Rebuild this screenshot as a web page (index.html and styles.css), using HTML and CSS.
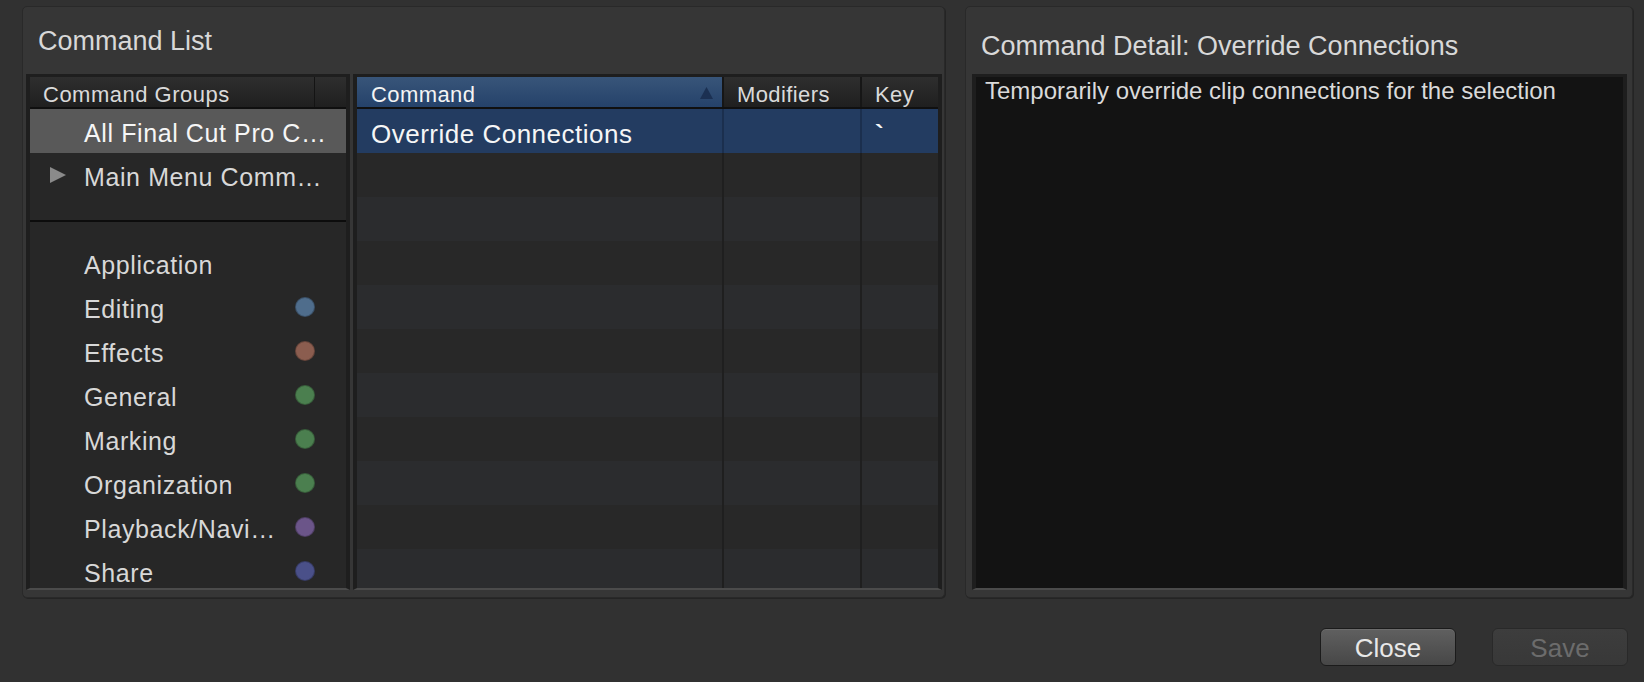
FILE: index.html
```html
<!DOCTYPE html>
<html lang="en">
<head>
<meta charset="utf-8">
<title>Command List</title>
<link rel="stylesheet" href="styles.css">
</head>
<body>
<div class="main">
  <section class="panel panel-list">
    <h1 class="panel-title">Command List</h1>
    <div class="list-body">
      <div class="box groups">
        <div class="groups-head">
          <div class="gh-cell">Command Groups</div>
          <div class="gh-rest"></div>
        </div>
        <div class="g-row selected"><span class="g-icon"></span><span class="g-label">All Final Cut Pro C…</span></div>
        <div class="g-row"><span class="g-icon"><svg class="disclosure" width="16" height="16" viewBox="0 0 16 16"><polygon points="0,0 16,8 0,16"/></svg></span><span class="g-label">Main Menu Comm…</span></div>
        <div class="g-sep"></div>
        <div class="g-row"><span class="g-icon"></span><span class="g-label">Application</span></div>
        <div class="g-row"><span class="g-icon"></span><span class="g-label">Editing</span><span class="dot dot-blue"></span></div>
        <div class="g-row"><span class="g-icon"></span><span class="g-label">Effects</span><span class="dot dot-brown"></span></div>
        <div class="g-row"><span class="g-icon"></span><span class="g-label">General</span><span class="dot dot-green"></span></div>
        <div class="g-row"><span class="g-icon"></span><span class="g-label">Marking</span><span class="dot dot-green"></span></div>
        <div class="g-row"><span class="g-icon"></span><span class="g-label">Organization</span><span class="dot dot-green"></span></div>
        <div class="g-row"><span class="g-icon"></span><span class="g-label">Playback/Navi…</span><span class="dot dot-purple"></span></div>
        <div class="g-row"><span class="g-icon"></span><span class="g-label">Share</span><span class="dot dot-indigo"></span></div>
      </div>
      <div class="box table">
        <div class="t-head">
          <div class="th th-sorted"><span>Command</span><svg class="sort" width="13" height="12" viewBox="0 0 13 12"><polygon points="6.5,0 13,12 0,12"/></svg></div>
          <div class="th th-sep">Modifiers</div>
          <div class="th th-sep">Key</div>
        </div>
        <div class="t-row selected"><div class="td">Override Connections</div><div class="td td-sep"></div><div class="td td-sep td-key">`</div></div>
        <div class="t-row"><div class="td"></div><div class="td td-sep"></div><div class="td td-sep"></div></div>
        <div class="t-row"><div class="td"></div><div class="td td-sep"></div><div class="td td-sep"></div></div>
        <div class="t-row"><div class="td"></div><div class="td td-sep"></div><div class="td td-sep"></div></div>
        <div class="t-row"><div class="td"></div><div class="td td-sep"></div><div class="td td-sep"></div></div>
        <div class="t-row"><div class="td"></div><div class="td td-sep"></div><div class="td td-sep"></div></div>
        <div class="t-row"><div class="td"></div><div class="td td-sep"></div><div class="td td-sep"></div></div>
        <div class="t-row"><div class="td"></div><div class="td td-sep"></div><div class="td td-sep"></div></div>
        <div class="t-row"><div class="td"></div><div class="td td-sep"></div><div class="td td-sep"></div></div>
        <div class="t-row"><div class="td"></div><div class="td td-sep"></div><div class="td td-sep"></div></div>
        <div class="t-row"><div class="td"></div><div class="td td-sep"></div><div class="td td-sep"></div></div>
      </div>
    </div>
  </section>
  <section class="panel panel-detail">
    <h1 class="panel-title">Command Detail: Override Connections</h1>
    <div class="box detail-box">
      <p class="detail-text">Temporarily override clip connections for the selection</p>
    </div>
  </section>
</div>
<div class="footer">
  <button class="btn btn-close" type="button">Close</button>
  <button class="btn btn-save" type="button" disabled>Save</button>
</div>
</body>
</html>
```

FILE: styles.css
```css
html, body {
  margin: 0;
  padding: 0;
}

body {
  width: 1644px;
  height: 682px;
  overflow: hidden;
  background: #313131;
  font-family: "Liberation Sans", Arial, sans-serif;
  color: #d8d8d8;
}

.main {
  display: flex;
  gap: 20px;
  padding: 6px 0 0 22px;
  height: 598px;
  box-sizing: border-box;
}

.panel {
  background: #363636;
  border: 1px solid #292929;
  border-radius: 5px;
  box-shadow: 1px 1px 0 #242424;
  height: 592px;
  box-sizing: border-box;
  display: flex;
  flex-direction: column;
}

.panel-list {
  width: 923px;
}

.panel-detail {
  width: 668px;
}

.panel-title {
  margin: 0;
  font-weight: normal;
  font-size: 27px;
  line-height: 31px;
  color: #d8d8d8;
  padding: 19px 0 0 15px;
  height: 67px;
  box-sizing: border-box;
  white-space: nowrap;
}

.panel-detail .panel-title {
  padding-top: 24px;
}

.list-body {
  display: flex;
  gap: 3px;
  padding-left: 3px;
}

.box {
  border: 4px solid #1e1e1e;
  border-top-width: 3px;
  border-bottom: 2px solid #4b4b4b;
  height: 516px;
  box-sizing: border-box;
  overflow: hidden;
}

/* command groups */
.groups {
  width: 324px;
  background: #272727;
}

.groups-head {
  display: flex;
  height: 32px;
  box-sizing: border-box;
  border-bottom: 2px solid #0f0f0f;
  background: linear-gradient(#2e2e2e, #1f1f1f);
}

.gh-cell {
  width: 285px;
  border-right: 1px solid #141414;
  padding: 6px 0 0 13px;
  box-sizing: border-box;
  font-size: 22px;
  line-height: 24px;
  letter-spacing: 0.5px;
  color: #dadada;
  white-space: nowrap;
}

.gh-rest {
  flex: 1;
}

.g-row {
  display: grid;
  grid-template-columns: 54px 1fr 20px;
  align-items: center;
  height: 44px;
  padding-right: 31px;
  box-sizing: border-box;
}

.g-row.selected {
  background: #595959;
}

.g-row.selected .g-label {
  color: #f6f6f6;
}

.g-icon {
  display: flex;
  align-items: center;
  padding-left: 20px;
  height: 44px;
}

.disclosure {
  display: block;
  fill: #8a8a8a;
}

.g-label {
  font-size: 25px;
  line-height: 40px;
  padding-top: 4px;
  letter-spacing: 0.6px;
  color: #d8d8d8;
  white-space: nowrap;
}

.g-sep {
  height: 25px;
  box-sizing: border-box;
  border-bottom: 2px solid #0c0c0c;
  margin-bottom: 19px;
}

.dot {
  width: 20px;
  height: 20px;
  border-radius: 50%;
  box-sizing: border-box;
  border: 1px solid rgba(0, 0, 0, 0.25);
}

.dot-blue { background: #4f6d8c; }
.dot-brown { background: #8b5d4f; }
.dot-green { background: #4b7f4f; }
.dot-purple { background: #6b5589; }
.dot-indigo { background: #4a5089; }

/* command table */
.table {
  width: 589px;
  background: #282828;
}

.t-head,
.t-row {
  display: grid;
  grid-template-columns: 365px 138px 78px;
}

.t-head {
  height: 32px;
  box-sizing: border-box;
  border-bottom: 2px solid #101010;
  background: linear-gradient(#2e2e2e, #1f1f1f);
}

.th {
  font-size: 22px;
  line-height: 24px;
  padding: 6px 0 0 13px;
  letter-spacing: 0.4px;
  color: #dadada;
  box-sizing: border-box;
  white-space: nowrap;
}

.th-sep {
  border-left: 2px solid #161616;
}

.th-sorted {
  display: flex;
  justify-content: space-between;
  padding-left: 14px;
  background: linear-gradient(#385579, #25426a);
  color: #f4f4f4;
}

.sort {
  display: block;
  fill: #1b3052;
  margin: 4px 9px 0 0;
}

.t-row {
  height: 44px;
}

.t-row:nth-child(odd) {
  background: #282828;
}

.t-row:nth-child(even) {
  background: #2b2c2e;
}

.td {
  font-size: 26px;
  line-height: 40px;
  padding: 5px 0 0 14px;
  letter-spacing: 0.5px;
  color: #f6f6f6;
  white-space: nowrap;
  box-sizing: border-box;
}

.td-sep {
  border-left: 2px solid #1f1f1f;
  padding-left: 13px;
}

.td-key {
  font-weight: bold;
}

.t-row.selected {
  background: #233c61;
}

.t-row.selected .td-sep {
  border-left-color: #1b2f4e;
}

/* detail */
.detail-box {
  margin: 0 5px 0 6px;
  background: #131313;
}

.detail-text {
  margin: 0;
  padding: 0 9px;
  font-size: 24px;
  line-height: 28px;
  color: #dadada;
  white-space: nowrap;
}

/* footer */
.footer {
  display: flex;
  justify-content: flex-end;
  gap: 36px;
  padding: 30px 16px 0 0;
}

.btn {
  width: 136px;
  height: 38px;
  box-sizing: border-box;
  border-radius: 6px;
  font-family: "Liberation Sans", Arial, sans-serif;
  font-size: 26px;
  line-height: 34px;
  padding: 2px 0 0;
  margin: 0;
  text-align: center;
}

.btn-close {
  background: linear-gradient(#606060, #474747);
  border: 1px solid #1b1b1b;
  box-shadow: inset 0 1px 0 rgba(255, 255, 255, 0.08);
  color: #e8e8e8;
}

.btn-save {
  background: linear-gradient(#3d3d3d, #383838);
  border: 1px solid #292929;
  color: #6c6c6c;
}
```
